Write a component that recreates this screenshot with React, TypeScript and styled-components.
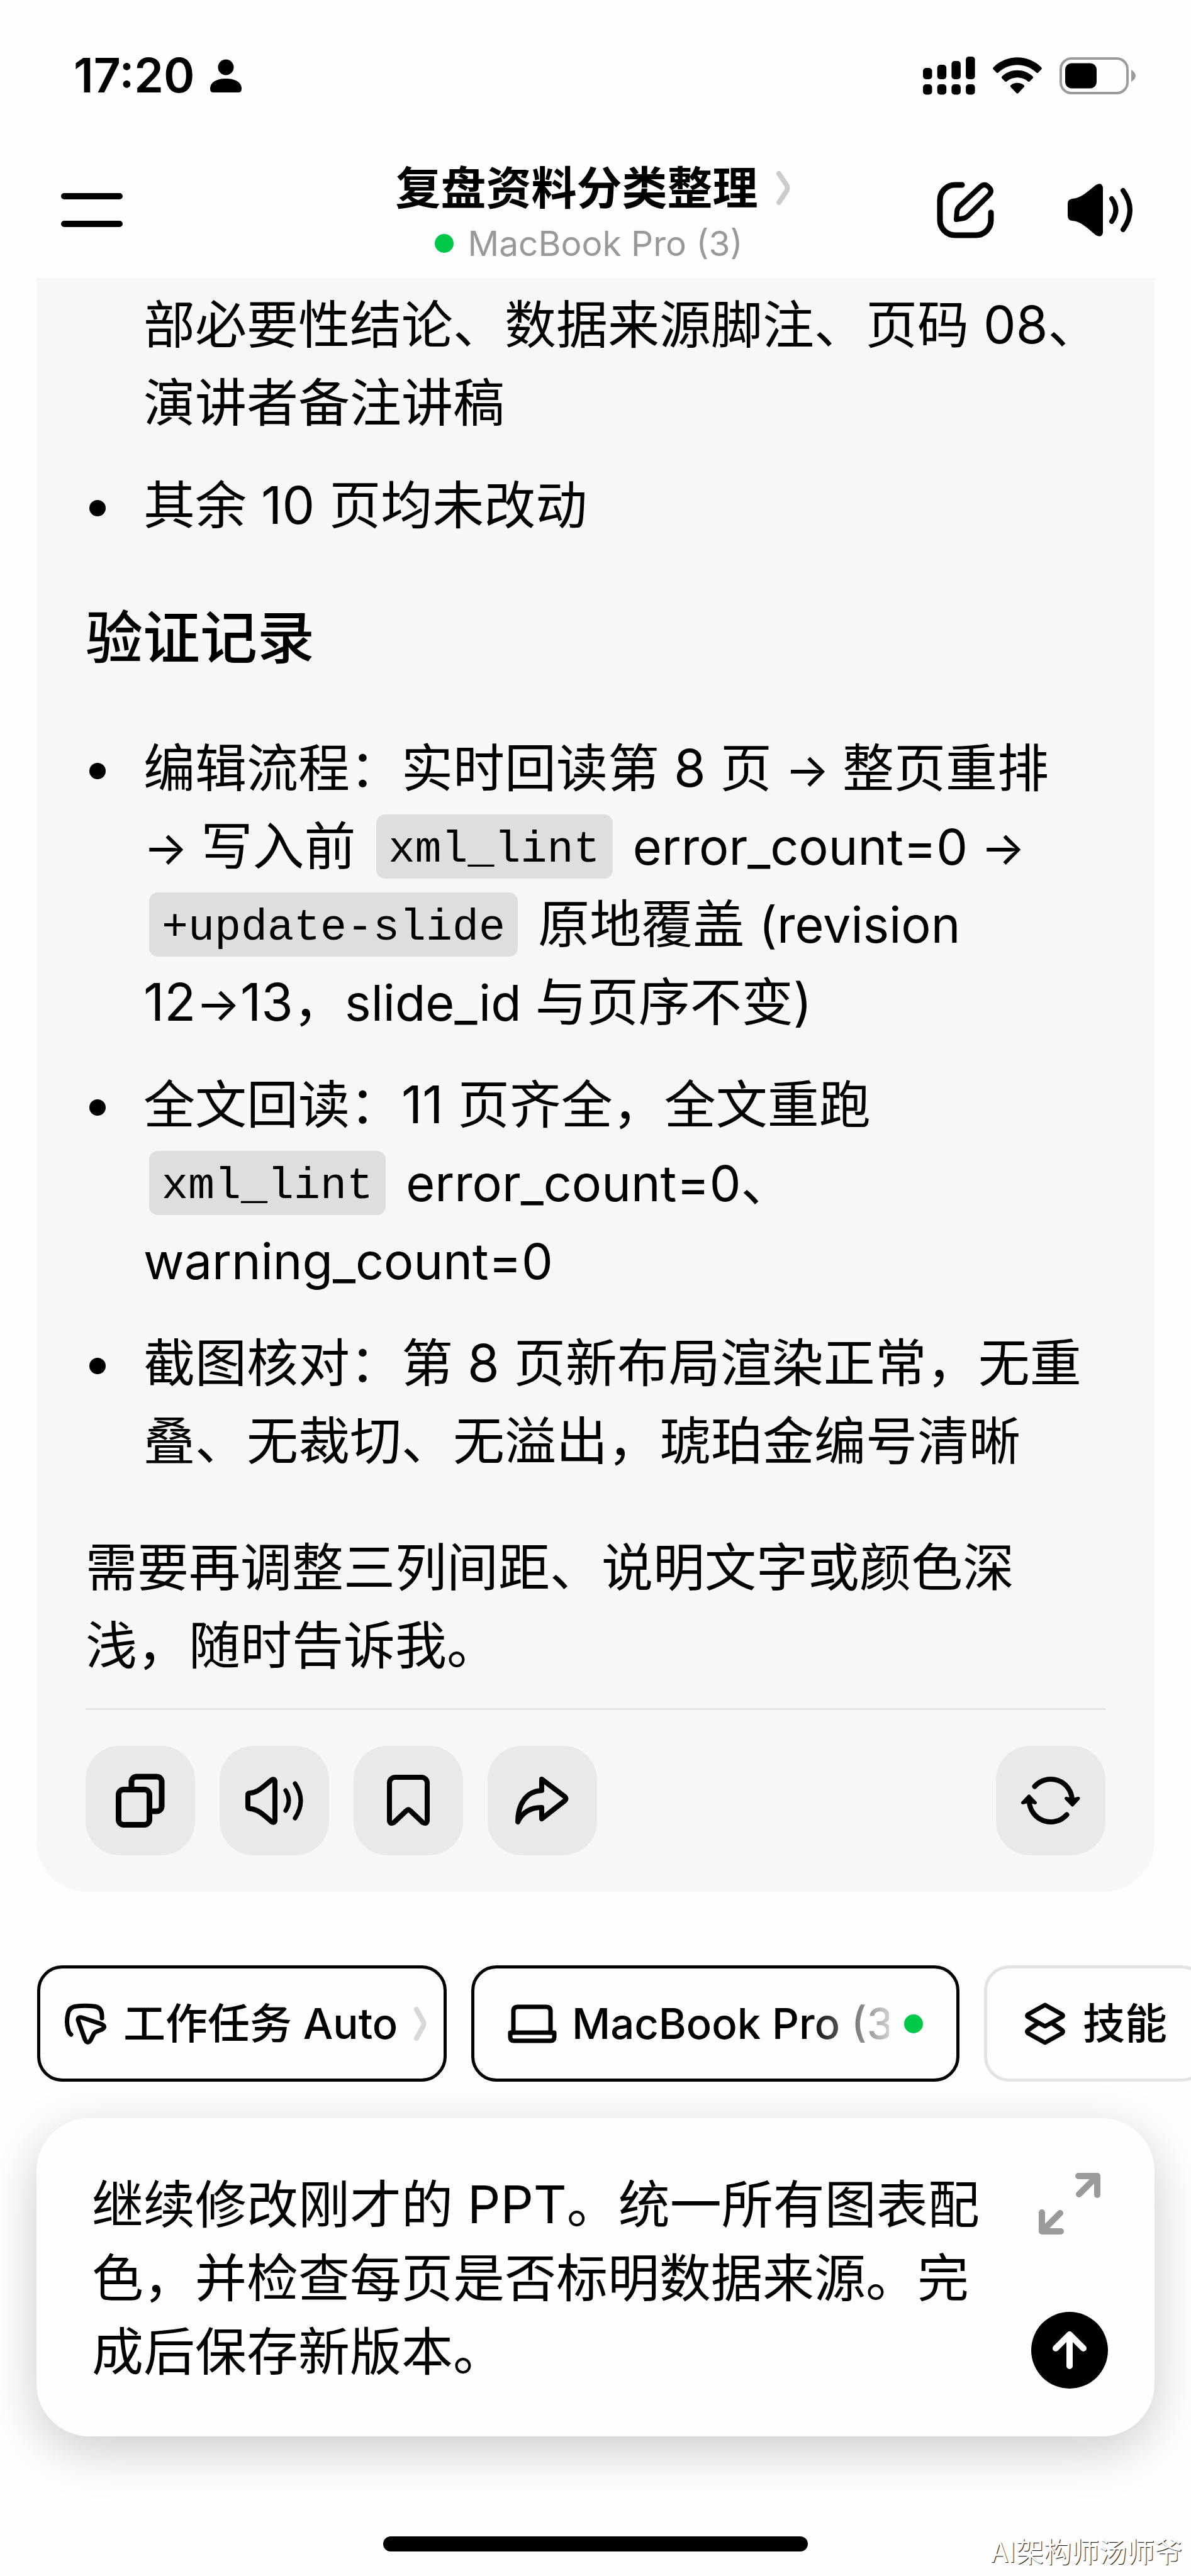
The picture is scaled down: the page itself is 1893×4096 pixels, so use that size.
import React, { useState } from 'react';
import styled, { createGlobalStyle, css, ThemeProvider } from 'styled-components';

const theme = {
    colors: {
        black: '#000000',
        white: '#ffffff',
        page: '#fefefe',
        card: '#f7f7f7',
        button: '#e9e9e9',
        code: '#dedede',
        line: '#e3e3e3',
        gray: '#999999',
        green: '#00c94a',
    },
    fonts: {
        sans: `Inter, 'Noto Sans CJK SC', sans-serif`,
        mono: `'Liberation Mono', 'Noto Sans CJK SC', monospace`,
    }
};

const GlobalStyle = createGlobalStyle`
    * {
        box-sizing: border-box;
    }
    body {
        margin: 0;
        background-color: ${theme.colors.page};
        color: ${theme.colors.black};
        font-family: ${theme.fonts.sans};
        overflow-x: hidden;
    }
    button, textarea {
        font: inherit;
        color: inherit;
    }
    svg {
        display: block;
        flex-shrink: 0;
    }
`

/* ---------- icons ---------- */

type IconProps = {
    w: number,
    h: number,
    stroke?: number,
    color?: string,
    children: React.ReactNode,
}

const Icon = ({ w, h, stroke = 8, color = '#000', children } : IconProps) => (
    <svg
        width={w}
        height={h}
        viewBox={`0 0 ${w} ${h}`}
        fill="none"
        stroke={color}
        strokeWidth={stroke}
        strokeLinecap="round"
        strokeLinejoin="round"
        aria-hidden="true"
    >
        { children }
    </svg>
);

const PersonIcon = () => (
    <Icon w={50} h={53} stroke={0}>
        <circle cx="25" cy="13" r="12.5" fill="#000" />
        <path d="M5 53 Q0 53 0 47 C0 37 10 31 25 31 S50 37 50 47 Q50 53 45 53 Z" fill="#000" />
    </Icon>
);

const SignalIcon = () => (
    <Icon w={83} h={61} stroke={0}>
        <g fill="#000">
            <rect x="0" y="18" width="14.5" height="18" rx="5" />
            <rect x="22.7" y="13" width="14.5" height="23" rx="5" />
            <rect x="45.4" y="7" width="14.5" height="29" rx="5" />
            <rect x="68.1" y="0" width="14.5" height="36" rx="5" />
            <rect x="0" y="44" width="14.5" height="16.5" rx="5" />
            <rect x="22.7" y="44" width="14.5" height="16.5" rx="5" />
            <rect x="45.4" y="44" width="14.5" height="16.5" rx="5" />
            <rect x="68.1" y="44" width="14.5" height="16.5" rx="5" />
        </g>
    </Icon>
);

const WifiIcon = () => (
    <Icon w={78} h={58} stroke={0}>
        <g fill="#000">
            <path d="M1 16 C22 -5 56 -5 77 16 Q78.500 18 77 19.500 L72 24.500 Q71 25.500 69.500 24.500 C52 8 26 8 8.500 24.500 Q7 25.500 6 24.500 L1 19.500 Q-.5 18 1 16 Z" />
            <path d="M14.500 30.500 C28 17.500 50 17.500 63.500 30.500 Q65 32 63.500 33.500 L58.500 38.500 Q57.500 39.500 56 38.500 C46 30 32 30 22 38.500 Q20.500 39.500 19.500 38.500 L14.500 33.500 Q13 32 14.500 30.500 Z" />
            <path d="M28.500 44.500 C34 39.500 44 39.500 49.500 44.500 Q51 46 49.500 47.500 L40.500 57 Q39 58.500 37.500 57 L28.500 47.500 Q27 46 28.500 44.500 Z" />
        </g>
    </Icon>
);

const BatteryIcon = () => (
    <Icon w={121} h={59} stroke={0}>
        <rect x="2" y="2" width="106" height="55" rx="17" stroke="#9b9b9b" strokeWidth="4" />
        <rect x="9" y="9.500" width="50" height="40" rx="10" fill="#000" />
        <path d="M114 20 Q121 24 121 29.500 T114 39 Z" fill="#9b9b9b" />
    </Icon>
);

const MenuIcon = () => (
    <Icon w={98} h={56} stroke={10}>
        <path d="M5 6 H93 M5 50 H93" />
    </Icon>
);

const HeaderChevron = () => (
    <Icon w={22} h={54} color="#ccc" stroke={8}>
        <path d="M4 4 L16 22 Q19 27 16 32 L4 50" />
    </Icon>
);

const ComposeIcon = () => (
    <Icon w={91} h={90} stroke={9}>
        <path d="M40 5 H29 A24 24 0 0 0 5 29 V61 A24 24 0 0 0 29 85 H62 A24 24 0 0 0 86 61 V49" />
        <path d="M31 60 L32 47 Q32 43 36 39 L69 8 Q76 2 82 8 Q89 14 83 21 L51 53 Q47 57 43 58 Z" stroke="#000" strokeWidth="8" />
    </Icon>
);

const SpeakerIcon = () => (
    <Icon w={104} h={84}>
        <path d="M0 32 Q0 25 7 24 C22 23 32 12 45 2 Q54 -3 56 6 V78 Q54 87 45 82 C32 72 22 60 7 59 Q0 58 0 51 Z" fill="#000" stroke="none" />
        <path d="M70 24 Q83 42 70 60" />
        <path d="M88 11 Q110 42 88 73" />
    </Icon>
);

const CopyIcon = () => (
    <Icon w={78} h={86} stroke={9}>
        <rect x="4.500" y="25.500" width="49" height="56" rx="8" />
        <path d="M25 25 V13 A8 8 0 0 1 33 5 H65 A8 8 0 0 1 73 13 V52 A8 8 0 0 1 65 60 H54" />
    </Icon>
);

const SpeakOutlineIcon = () => (
    <Icon w={92} h={77} stroke={8}>
        <path d="M4 29 Q4 26 8 26 C21 25 30 14 42 5 Q46 3 47 7 V70 Q46 74 42 72 C30 62 21 52 8 51 Q4 51 4 48 Z" />
        <path d="M64 22 Q74 38 64 54" strokeWidth="7" />
        <path d="M79 11 Q97 38 79 66" strokeWidth="7" />
    </Icon>
);

const BookmarkIcon = () => (
    <Icon w={68} h={82} stroke={8}>
        <path d="M4 13 A9 9 0 0 1 13 4 H55 A9 9 0 0 1 64 13 V73 Q63 79 57 76 L37 57 Q34 54 31 57 L11 76 Q5 79 4 73 Z" />
    </Icon>
);

const ShareIcon = () => (
    <Icon w={86} h={78} stroke={8}>
        <path d="M42 5 L79 33 Q82 36 79 39 L42 68 V50 C25 50 12 56 4 73 C4 44 18 24 42 23 Z" />
    </Icon>
);

const RefreshIcon = () => (
    <Icon w={94} h={78} stroke={8}>
        <path d="M21.500 16.500 A34 34 0 0 1 81 38" />
        <path d="M72.500 61.500 A34 34 0 0 1 13 40" />
        <path d="M71.500 35.500 L81.500 38 L91 35.500 L81.500 46 Z" fill="#000" strokeWidth="5" />
        <path d="M2.500 42.500 L12.500 40 L22.500 42.500 L12.500 32 Z" fill="#000" strokeWidth="5" />
    </Icon>
);

const CursorIcon = () => (
    <Icon w={68} h={66} stroke={7}>
        <path d="M60 24 V19 Q59 6 47 5 Q33 3.500 20 5 Q8 6 6 17 Q3 30 6 41 Q7 47 11 50" />
        <path d="M22 27 Q22 22 28 23 L58 33 Q68 37 60 42 L52 45 Q47 47 46 51 L42 59 Q37 66 33 58 Z" />
    </Icon>
);

const LaptopIcon = () => (
    <Icon w={78} h={62} stroke={7}>
        <path d="M9 45 V11 Q9 4 16 4 H61 Q68 4 68 11 V45" />
        <path d="M4 45 H74 V52 Q74 58 68 58 H10 Q4 58 4 52 Z" />
    </Icon>
);

const SkillIcon = () => (
    <Icon w={68} h={70} stroke={7}>
        <path d="M34 5 L61 20 Q64 22 61 24 L34 39 L7 24 Q4 22 7 20 Z" />
        <path d="M23 34 L7 45 Q4 47.500 7 50 L34 65 L61 50 Q64 47.500 61 45 L45 34" />
    </Icon>
);

const ChipChevron = () => (
    <Icon w={20} h={54} color="#d8d8d8" stroke={8}>
        <path d="M4 4 L15 24 Q16 27 15 30 L4 50" />
    </Icon>
);

const ExpandIcon = () => (
    <Icon w={100} h={100} color="#9a9a9a" stroke={10}>
        <path d="M64 6 H94 V36 M92 8 L65 35" />
        <path d="M6 64 V94 H36 M8 92 L35 65" />
    </Icon>
);

const ArrowUpIcon = () => (
    <Icon w={58} h={62} color="#fff" stroke={10}>
        <path d="M29 6 V56 M7 28 L29 6 L51 28" />
    </Icon>
);

/* ---------- layout ---------- */

const Screen = styled.div`
    display: flex;
    flex-direction: column;
    min-height: 100vh;
`

const StatusBar = styled.div`
    display: flex;
    align-items: center;
    justify-content: space-between;
    padding: 80px 88px 0 117px;
    height: 160px;
`

const StatusGroup = styled.div<{ gap: number }>`
    display: flex;
    align-items: center;
    gap: ${p => p.gap}px;
`

const Clock = styled.span`
    font-size: 75px;
    line-height: 80px;
    font-weight: 600;
`

const Header = styled.header`
    display: grid;
    grid-template-columns: 1fr auto 1fr;
    align-items: center;
    height: 282px;
    padding: 66px 92px 0 97px;
`

const IconButton = styled.button`
    display: flex;
    padding: 0;
    border: none;
    background: none;
    cursor: pointer;
`

const HeaderTitle = styled.div`
    display: flex;
    flex-direction: column;
    align-items: center;
    padding: 18px 14px 0 0;
`

const TitleRow = styled.h1`
    display: flex;
    align-items: center;
    gap: 29px;
    margin: 0;
    font-size: 72px;
    line-height: 88px;
    font-weight: 600;
`

const Subtitle = styled.div`
    display: flex;
    align-items: center;
    gap: 22px;
    padding-right: 12px;
    color: ${p => p.theme.colors.gray};
    font-size: 55px;
    line-height: 88px;
`

const Dot = styled.span`
    width: 30px;
    height: 30px;
    border-radius: 50%;
    background-color: ${p => p.theme.colors.green};
    flex-shrink: 0;
`

const HeaderActions = styled.div`
    display: flex;
    align-items: center;
    justify-content: flex-end;
    gap: 117px;
`

const Card = styled.article`
    margin: 0 58px;
    padding: 13px 78px 58px;
    border-radius: 0 0 80px 80px;
    background-color: ${p => p.theme.colors.card};
    font-size: 82px;
    line-height: 124px;
`

const List = styled.ul`
    display: flex;
    flex-direction: column;
    gap: 39px;
    margin: 0;
    padding: 0;
    list-style: none;
`

const Item = styled.li<{ continued?: boolean }>`
    padding-left: 92px;
    ${p => !p.continued && css`
        &::before {
            content: '';
            float: left;
            width: 26px;
            height: 26px;
            margin: 53px 0 0 -86px;
            border-radius: 50%;
            background-color: ${p.theme.colors.black};
        }
    `}
`

const Heading = styled.h2`
    margin: 86px 0 84px;
    font-size: 91px;
    line-height: 124px;
    font-weight: 500;
`

// latin words run wider than the chinese text around them
const Latin = styled.span`
    font-size: 79px;
    line-height: 1;
`

const Arrow = styled.span`
    font-size: 74px;
    line-height: 1;
`

const Code = styled.code`
    margin: 0 9px;
    padding: 17px 20px 6px;
    border-radius: 14px;
    background-color: ${p => p.theme.colors.code};
    font-family: ${p => p.theme.fonts.mono};
    font-size: 70px;
    line-height: 1;
    vertical-align: 5px;
`

const Closing = styled.p`
    margin: 77px 0 37px;
`

const CardFooter = styled.footer`
    display: flex;
    gap: 39px;
    padding-top: 57px;
    border-top: 3px solid ${p => p.theme.colors.line};
`

const ActionButton = styled.button<{ last?: boolean }>`
    display: flex;
    align-items: center;
    justify-content: center;
    width: 174px;
    height: 174px;
    padding: 0;
    border: none;
    border-radius: 54px;
    background-color: ${p => p.theme.colors.button};
    cursor: pointer;
    ${p => p.last && css`
        margin-left: auto;
    `}
`

const Chips = styled.nav`
    display: flex;
    gap: 39px;
    margin-top: 117px;
    padding-left: 59px;
    overflow: hidden;
`

const Chip = styled.button<{ muted?: boolean }>`
    display: flex;
    align-items: center;
    height: 185px;
    padding: 0 53px;
    border: 5px solid ${p => p.muted ? p.theme.colors.line : p.theme.colors.black};
    border-radius: 40px;
    background-color: ${p => p.theme.colors.page};
    font-size: 67px;
    line-height: 80px;
    font-weight: 500;
    white-space: nowrap;
    flex-shrink: 0;
    cursor: pointer;
`

const TaskChip = styled(Chip)`
    gap: 26px;
    width: 651px;
    padding: 0 34px 0 38px;
`

const DeviceChip = styled(Chip)`
    gap: 24px;
    width: 776px;
`

const DeviceName = styled.span`
    width: 504px;
    overflow: hidden;
    text-align: left;
    mask-image: linear-gradient(to right, #000 74%, transparent 106%);
`

const SkillChip = styled(Chip)`
    gap: 26px;
    padding: 0 58px;
`

const Composer = styled.form`
    display: flex;
    justify-content: space-between;
    margin: 58px 58px 0;
    padding: 79px 74px 76px 88px;
    border-radius: 84px;
    background-color: ${p => p.theme.colors.page};
    box-shadow: 0 22px 80px rgba(0, 0, 0, 0.2);
`

const MessageInput = styled.textarea`
    flex: 1;
    max-width: 1440px;
    height: 351px;
    padding: 0;
    border: none;
    outline: none;
    resize: none;
    overflow: hidden;
    background: transparent;
    font-size: 82px;
    line-height: 117px;
`

const ComposerActions = styled.div`
    display: flex;
    flex-direction: column;
    align-items: center;
    justify-content: space-between;
    padding-top: 7px;
`

const SendButton = styled.button`
    display: flex;
    align-items: center;
    justify-content: center;
    width: 122px;
    height: 122px;
    padding: 0;
    border: none;
    border-radius: 50%;
    background-color: ${p => p.theme.colors.black};
    cursor: pointer;
`

const BottomBar = styled.div`
    display: grid;
    grid-template-columns: 1fr auto 1fr;
    align-items: start;
    margin-top: auto;
    padding-bottom: 11px;
`

const HomeIndicator = styled.div`
    grid-column: 2;
    width: 675px;
    height: 24px;
    margin-top: 8px;
    border-radius: 12px;
    background-color: ${p => p.theme.colors.black};
`

const Watermark = styled.span`
    justify-self: end;
    padding-right: 14px;
    color: ${p => p.theme.colors.white};
    font-family: 'Noto Sans CJK SC', sans-serif;
    font-size: 44px;
    line-height: 60px;
    text-shadow: 1px 1px 1px ${p => p.theme.colors.black};
`

const App = () => {
    const [message, setMessage] = useState('继续修改刚才的 PPT。统一所有图表配色，并检查每页是否标明数据来源。完成后保存新版本。');

    return (
        <ThemeProvider theme={theme}>
            <GlobalStyle />
            <Screen lang="zh-CN">
                <StatusBar>
                    <StatusGroup gap={24}>
                        <Clock>17:20</Clock>
                        <PersonIcon />
                    </StatusGroup>
                    <StatusGroup gap={28}>
                        <SignalIcon />
                        <WifiIcon />
                        <BatteryIcon />
                    </StatusGroup>
                </StatusBar>

                <Header>
                    <IconButton type="button" aria-label="菜单">
                        <MenuIcon />
                    </IconButton>
                    <HeaderTitle>
                        <TitleRow>
                            复盘资料分类整理
                            <HeaderChevron />
                        </TitleRow>
                        <Subtitle>
                            <Dot />
                            MacBook Pro (3)
                        </Subtitle>
                    </HeaderTitle>
                    <HeaderActions>
                        <IconButton type="button" aria-label="新建">
                            <ComposeIcon />
                        </IconButton>
                        <IconButton type="button" aria-label="朗读">
                            <SpeakerIcon />
                        </IconButton>
                    </HeaderActions>
                </Header>

                <Card>
                    <List>
                        <Item continued>
                            部必要性结论、数据来源脚注、页码 08、<br />
                            演讲者备注讲稿
                        </Item>
                        <Item>其余 10 页均未改动</Item>
                    </List>
                    <Heading>验证记录</Heading>
                    <List>
                        <Item>
                            编辑流程：实时回读第 8 页<Arrow> → </Arrow>整页重排<br />
                            <Arrow>→ </Arrow>写入前 <Code>xml_lint</Code> <Latin>error_count=0</Latin><Arrow> →</Arrow><br />
                            <Code>+update-slide</Code> 原地覆盖 <Latin>(revision</Latin><br />
                            12<Arrow>→</Arrow>13，<Latin>slide_id </Latin>与页序不变)
                        </Item>
                        <Item>
                            全文回读：11 页齐全，全文重跑<br />
                            <Code>xml_lint</Code> <Latin>error_count=0</Latin>、<br />
                            <Latin>warning_count=0</Latin>
                        </Item>
                        <Item>
                            截图核对：第 8 页新布局渲染正常，无重<br />
                            叠、无裁切、无溢出，琥珀金编号清晰
                        </Item>
                    </List>
                    <Closing>
                        需要再调整三列间距、说明文字或颜色深<br />
                        浅，随时告诉我。
                    </Closing>
                    <CardFooter>
                        <ActionButton type="button" aria-label="复制"><CopyIcon /></ActionButton>
                        <ActionButton type="button" aria-label="朗读"><SpeakOutlineIcon /></ActionButton>
                        <ActionButton type="button" aria-label="收藏"><BookmarkIcon /></ActionButton>
                        <ActionButton type="button" aria-label="分享"><ShareIcon /></ActionButton>
                        <ActionButton type="button" aria-label="重新生成" last><RefreshIcon /></ActionButton>
                    </CardFooter>
                </Card>

                <Chips>
                    <TaskChip type="button">
                        <CursorIcon />
                        工作任务 Auto
                        <ChipChevron />
                    </TaskChip>
                    <DeviceChip type="button">
                        <LaptopIcon />
                        <DeviceName>MacBook Pro (3)</DeviceName>
                        <Dot />
                    </DeviceChip>
                    <SkillChip type="button" muted>
                        <SkillIcon />
                        技能
                    </SkillChip>
                </Chips>

                <Composer onSubmit={e => e.preventDefault()}>
                    <MessageInput
                        aria-label="消息"
                        value={message}
                        onChange={e => setMessage(e.target.value)}
                    />
                    <ComposerActions>
                        <IconButton type="button" aria-label="展开">
                            <ExpandIcon />
                        </IconButton>
                        <SendButton type="submit" aria-label="发送">
                            <ArrowUpIcon />
                        </SendButton>
                    </ComposerActions>
                </Composer>

                <BottomBar>
                    <HomeIndicator />
                    <Watermark>AI架构师汤师爷</Watermark>
                </BottomBar>
            </Screen>
        </ThemeProvider>
    )
}

export default App;
